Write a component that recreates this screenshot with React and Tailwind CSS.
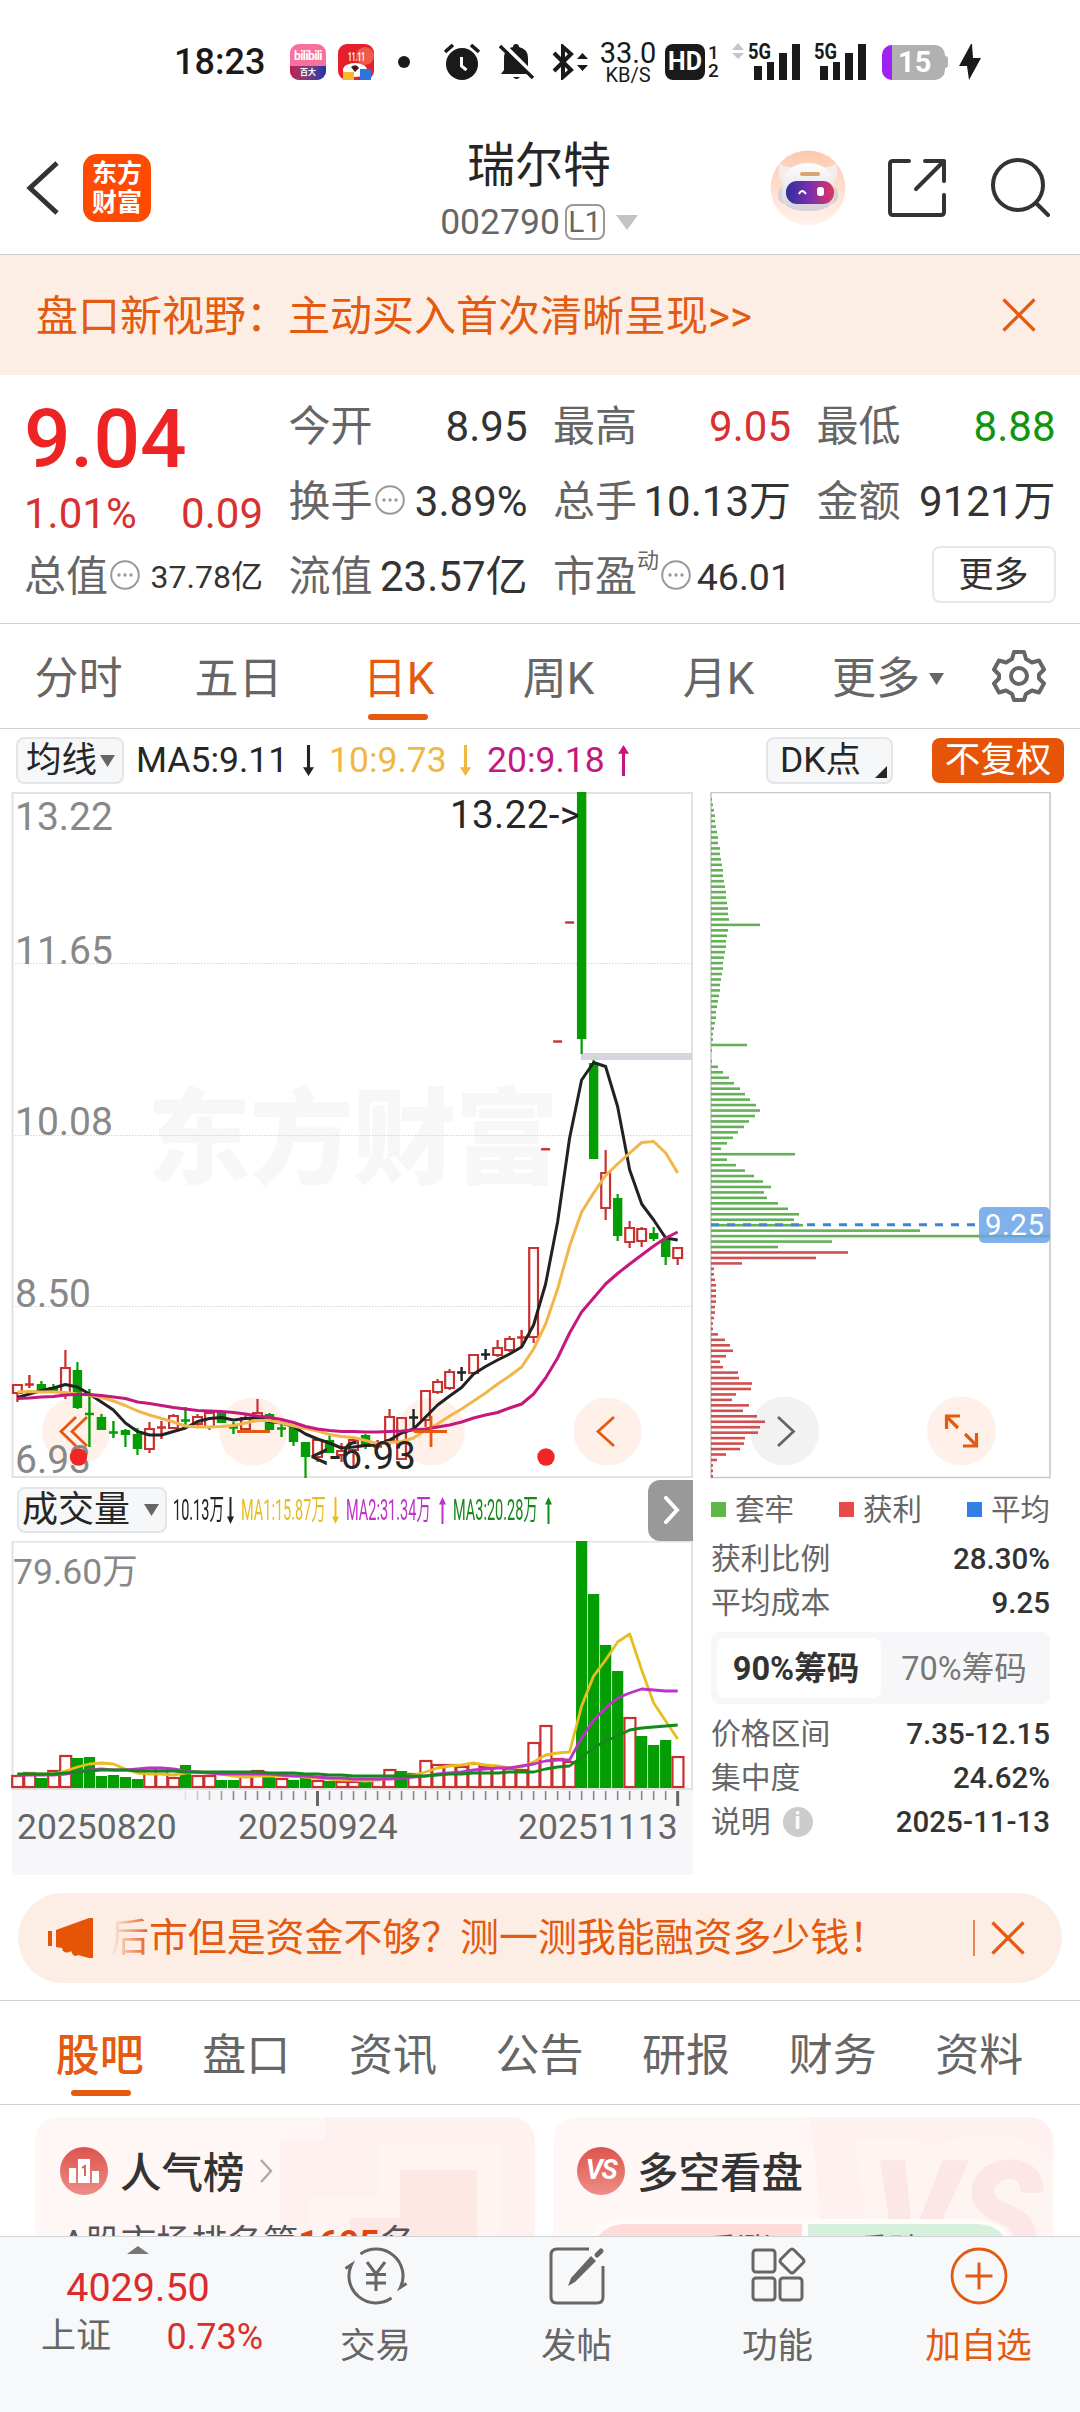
const UP = '#c8312f';
const DOWN = '#049d04';
const FLAT = '#222222';
const ACCENT = '#e35a10';

// [kind, high, bodyTop, bodyBottom, low]
const CANDLES = [
  ['u', 1385, 1385, 1393, 1402], ['u', 1375, 1384, 1385, 1388], ['d', 1381, 1384, 1392, 1393], ['d', 1384, 1387, 1392, 1393],
  ['u', 1350, 1368, 1393, 1399], ['d', 1362, 1370, 1408, 1409], ['d', 1389, 1413, 1415, 1447], ['d', 1414, 1417, 1430, 1430],
  ['d', 1421, 1432, 1433, 1438], ['d', 1429, 1430, 1435, 1447], ['d', 1428, 1434, 1449, 1455], ['u', 1422, 1429, 1449, 1453],
  ['u', 1421, 1427, 1428, 1439], ['u', 1414, 1416, 1428, 1428], ['d', 1407, 1420, 1421, 1425], ['u', 1414, 1417, 1424, 1426],
  ['u', 1411, 1413, 1427, 1430], ['d', 1411, 1412, 1423, 1423], ['d', 1422, 1427, 1428, 1434], ['u', 1415, 1418, 1429, 1429],
  ['u', 1399, 1413, 1418, 1420], ['d', 1413, 1414, 1430, 1430], ['d', 1424, 1428, 1429, 1437], ['d', 1425, 1427, 1442, 1446],
  ['d', 1442, 1442, 1457, 1478], ['u', 1439, 1440, 1457, 1462], ['d', 1434, 1440, 1453, 1453], ['u', 1443, 1451, 1455, 1462],
  ['u', 1438, 1440, 1450, 1466], ['d', 1434, 1435, 1447, 1449], ['u', 1440, 1446, 1447, 1449], ['u', 1409, 1417, 1440, 1446],
  ['u', 1417, 1418, 1459, 1460], ['f', 1409, 1417, 1418, 1428], ['u', 1390, 1391, 1420, 1427], ['u', 1379, 1382, 1392, 1394],
  ['u', 1369, 1372, 1388, 1390], ['f', 1367, 1372, 1373, 1381], ['u', 1354, 1355, 1373, 1373], ['f', 1349, 1354, 1355, 1360],
  ['u', 1340, 1348, 1355, 1357], ['u', 1336, 1339, 1350, 1352], ['u', 1330, 1337, 1338, 1347], ['u', 1248, 1248, 1337, 1343],
  ['u', 1149, 1149, 1149.5, 1149], ['u', 1041, 1041, 1042, 1041], ['u', 922, 922, 923, 922], ['d', 792, 792, 1039, 1054],
  ['d', 1060, 1063, 1159, 1159], ['u', 1150, 1173, 1208, 1220], ['d', 1194, 1198, 1236, 1241], ['u', 1221, 1228, 1242, 1248],
  ['u', 1227, 1229, 1241, 1247], ['d', 1227, 1233, 1239, 1241], ['d', 1239, 1240, 1257, 1265], ['u', 1247, 1248, 1258, 1265],
];

const MA5 = [1397.5, 1394, 1390.5, 1388, 1384.5, 1387, 1394, 1402, 1410, 1423, 1431.5, 1435, 1435, 1431.5, 1428, 1421.5, 1418.5, 1417.5, 1420, 1418.5, 1417.5, 1421.5, 1423, 1426.5, 1434, 1439, 1443, 1448, 1447, 1445.5, 1445, 1440, 1433, 1429, 1417, 1405, 1396, 1387.5, 1374, 1366.5, 1360, 1354, 1347, 1325, 1284, 1222, 1138, 1080, 1062.5, 1066.5, 1106.5, 1170, 1204, 1220, 1238, 1240];
const MA10 = [1392, 1391.5, 1392, 1392, 1392.5, 1394, 1395, 1397.5, 1401, 1405.5, 1411, 1415, 1418.5, 1422, 1426, 1427, 1427, 1426.5, 1425.5, 1423, 1420.5, 1420.5, 1423, 1426, 1428.5, 1431, 1434.5, 1436.5, 1437.5, 1440.5, 1443.5, 1442.5, 1441.5, 1438, 1430, 1424, 1416, 1409, 1401, 1393, 1384, 1376, 1367, 1349, 1324, 1289, 1246, 1212, 1193, 1175.5, 1164, 1153, 1142.5, 1141.5, 1153, 1173];
const MA20 = [1398.5, 1398, 1397, 1396.5, 1395, 1394.5, 1394.5, 1395.5, 1397, 1398.5, 1402, 1403.5, 1405.5, 1407.5, 1409, 1410.5, 1411, 1411.5, 1412.5, 1414, 1416, 1417.5, 1419.5, 1422.5, 1426.5, 1429, 1430.5, 1431.5, 1431.5, 1432, 1432, 1431.5, 1431, 1430, 1429, 1427, 1425, 1422, 1418, 1415, 1412.5, 1408, 1404, 1394, 1378, 1358, 1333, 1312, 1298, 1284, 1273.5, 1264, 1255, 1246, 1238, 1232];

// volume heights, a leading minus marks a falling day
const VOLUMES = [13, 16, -10, 18, 33, -30, -31, -12, -13, -11, -9, 21, 18, 11, -23, 13, 13, -8, -8, 12, 18, -11, 10, -8, -10, 8, -7, 7, 7, -6, 10, 19, -17, 15, 28, 24, 24, 22, 25, 22, 21, 20, 19, 46, 63, 30, 27, -247, -194, -143, -117, 71, -52, -43, -48, 32];
const VMA1 = [13, 14, 14, 14, 17, 21, 24, 25, 24, 19, 15, 14, 14, 13, 15, 16, 15, 14, 12, 11, 12, 12, 12, 12, 11, 10, 9, 8, 8, 7, 8, 10, 11, 13, 16, 20, 22, 23, 25, 23, 22, 20, 21, 26, 33, 35, 36, 82, 112, 128, 146, 154, 118, 85, 67, 49];
const VMA2 = [13, 13, 13, 13, 14, 16, 18, 19, 18, 18, 19, 20, 20, 19, 17, 16, 15, 14, 14, 14, 14, 14, 13, 12, 12, 11, 10, 10, 9, 9, 9, 9, 10, 11, 12, 14, 15, 16, 18, 19, 20, 20, 22, 24, 27, 28, 28, 50, 68, 80, 90, 95, 99, 98, 97, 97];
const VMA3 = [14, 14, 14, 14, 15, 16, 17, 18, 18, 18, 17, 17, 17, 17, 16, 16, 16, 16, 16, 16, 16, 15, 15, 15, 14, 14, 13, 13, 12, 12, 12, 12, 12, 12, 12, 13, 14, 14, 15, 15, 15, 16, 16, 16, 19, 21, 22, 31, 40, 47, 52, 58, 60, 61, 62, 63];

const CHIPS = [1, 2, 3, 4, 4, 5, 6, 7, 7, 9, 9, 10, 11, 12, 12, 13, 14, 15, 15, 16, 17, 17, 18, 49, 17, 16, 15, 15, 14, 13, 12, 12, 11, 10, 9, 9, 8, 7, 6, 5, 5, 4, 3, 2, 2, 36, 1, 0, 1, 7, 12, 18, 23, 29, 34, 39, 45, 49, 44, 38, 33, 27, 22, 16, 10, 84, 16, 25, 34, 43, 52, 60, 53, 56, 67, 77, 88, 83, 92, 209, 339, 121, 67, 137, 105, 31, 3, 3, 4, 5, 5, 5, 5, 4, 4, 3, 2, 2, 7, 14, 19, 22, 15, 9, 12, 27, 28, 41, 40, 25, 21, 38, 32, 46, 54, 49, 47, 34, 33, 29, 15, 6, 2, 2, 2];

const X = (i) => 17.4 + i * 12.005;
const line = (list, f = (v) => v) => list.map((v, i) => `${X(i).toFixed(1)},${f(v)}`).join(' ');

const StatusBar = () => (
  <div className="flex h-[124px] shrink-0 items-center pl-[174px] text-[#1a1a1a]">
    <div className="w-[116px] text-[36px] font-medium">18:23</div>
    <div className="flex h-9 w-9 flex-col items-center overflow-hidden rounded-[9px] bg-[#f8719c] text-white">
      <span className="h-[22px] text-[12px] leading-[24px] font-bold tracking-tighter">bilibili</span>
      <span className="h-[14px] w-full bg-gradient-to-r from-[#c4124c] to-[#1c2fa8] text-center text-[8px] leading-[13px] font-bold">百大</span>
    </div>
    <svg className="ml-3 h-9 w-9" viewBox="0 0 36 36">
      <rect width="36" height="36" rx="9" fill="#e6202b" />
      <circle cx="27" cy="12" r="9" fill="#ef5b49" />
      <ellipse cx="17" cy="26" rx="12" ry="7" fill="#fff" />
      <path d="M13 23q5-4 8 1l-4 4z" fill="#3b1a1a" />
      <rect x="5" y="28" width="11" height="8" fill="#f6b92c" />
      <rect x="22" y="25" width="11" height="11" fill="#2f74dc" />
      <text x="10" y="17" fontSize="13" fontWeight="700" fill="#fff" textLength="17" lengthAdjust="spacingAndGlyphs">11.11</text>
    </svg>
    <div className="ml-6 h-3 w-3 rounded-full bg-[#1a1a1a]" />
    <svg className="ml-[34px] h-9 w-9" viewBox="0 0 36 36" fill="none" stroke="#1a1a1a">
      <circle cx="18" cy="20" r="16" fill="#1a1a1a" stroke="none" />
      <path d="M1 8l8-7M35 8l-8-7" strokeWidth="3.6" />
      <path d="M17.5 13v9l5 4" stroke="#fff" strokeWidth="3" />
    </svg>
    <svg className="ml-[19px] h-9 w-9" viewBox="0 0 36 36" fill="#1a1a1a">
      <path d="M5 26V14q0-9 9-11a3 3 0 0 1 6 0q9 2 9 11v12l4 4H2z" />
      <path d="M14 33h7q-3.5 4-7 0z" />
      <path d="M3-1l34 34" stroke="#fff" strokeWidth="4" />
      <path d="M1 2l33 32" stroke="#1a1a1a" strokeWidth="3.4" />
    </svg>
    <svg className="ml-[16px] h-9 w-[38px]" viewBox="0 0 38 36" fill="none" stroke="#1a1a1a" strokeWidth="4">
      <path d="M3 9l17 17-8 7V3l8 7L3 27" />
      <path d="M26 15h11l-5.5-6zM26 21h11l-5.5 6z" fill="#1a1a1a" stroke="none" />
    </svg>
    <div className="ml-[8px] flex w-[62px] flex-col items-center">
      <span className="h-[22px] text-[29px] leading-[21px]">33.0</span>
      <span className="h-[17px] text-[20px] leading-[20px]">KB/S</span>
    </div>
    <div className="ml-[6px] flex h-9 w-10 items-center justify-center rounded-[8px] bg-[#1a1a1a] text-[25px] font-bold text-white">HD</div>
    <div className="ml-[3px] flex w-[21px] flex-col text-[19px] leading-[18px] font-medium">
      <span>1</span>
      <span>2</span>
    </div>
    <svg className="h-[40px] w-[78px]" viewBox="730 41 78 40" fill="#1a1a1a">
      <path d="M733 49h12l-6-7zM733 52h12l-6 6z" fill="#c6c6c6" />
      <text x="749" y="58" fontSize="22" fontWeight="700" textLength="23" lengthAdjust="spacingAndGlyphs">5G</text>
      <path d="M755 65h8v14h-8zM768 61h7v18h-7zM780 52h8v27h-8zM793 43h8v36h-8z" />
    </svg>
    <svg className="ml-[3px] h-[40px] w-[66px]" viewBox="811 41 66 40" fill="#1a1a1a">
      <text x="815" y="58" fontSize="22" fontWeight="700" textLength="23" lengthAdjust="spacingAndGlyphs">5G</text>
      <path d="M821 65h8v14h-8zM834 61h7v18h-7zM846 52h8v27h-8zM859 43h8v36h-8z" />
    </svg>
    <div className="ml-[6px] h-[35px] w-[63px] overflow-hidden rounded-[10px] bg-[#b1b1b1]">
      <div className="flex h-full items-center border-l-[10px] border-[#a020f6] pl-[6px] text-[29px] font-bold text-white">15</div>
    </div>
    <div className="h-3 w-[3px] rounded-r bg-[#b1b1b1]" />
    <svg className="ml-[11px] h-9 w-[22px]" viewBox="0 0 22 36" fill="#1a1a1a">
      <path d="M12 0L0 22h8L10 36 22 14h-8l-1-14z" />
    </svg>
  </div>
);

const Header = () => (
  <div className="flex h-[131px] shrink-0 items-center border-b border-[#d0d0d0] pb-[3px]">
    <svg className="ml-[24px] h-[56px] w-[38px]" viewBox="0 0 38 56" fill="none" stroke="#333" strokeWidth="5">
      <path d="M33 3L6 28l27 25" />
    </svg>
    <div className="ml-[21px] flex h-[68px] w-[68px] flex-col items-center justify-center rounded-[14px] bg-[#fe4a03] text-[25px] leading-[29px] font-bold text-white">
      <span>东方</span>
      <span>财富</span>
    </div>
    <div className="ml-[188px] flex w-[400px] flex-col items-center pt-[4px]">
      <div className="h-[65px] text-[48px] leading-[64px] text-[#262626]">瑞尔特</div>
      <div className="flex h-[46px] items-center text-[35.5px] leading-[46px] text-[#666]">
        <span>002790</span>
        <span className="ml-[5px] flex h-9 w-10 items-center justify-center rounded-[8px] border-2 border-[#999] text-[30px] leading-none">L1</span>
        <svg className="ml-[11px] h-4 w-[22px]" viewBox="0 0 22 16" fill="#c4c4c4">
          <path d="M0 1h22L11 16z" />
        </svg>
      </div>
    </div>
    <svg className="ml-[31px] h-[76px] w-[76px]" viewBox="0 0 76 76">
      <defs>
        <linearGradient id="halo" x2="0" y2="1">
          <stop stopColor="#fdc9ae" />
          <stop offset="1" stopColor="#fff4ee" />
        </linearGradient>
        <linearGradient id="visor">
          <stop stopColor="#2f2d9c" />
          <stop offset=".5" stopColor="#7a2fae" />
          <stop offset="1" stopColor="#e2355f" />
        </linearGradient>
        <linearGradient id="helmet" x2="0" y2="1">
          <stop stopColor="#fff" />
          <stop offset="1" stopColor="#d5d0d8" />
        </linearGradient>
      </defs>
      <circle cx="38" cy="38" r="37.5" fill="url(#halo)" />
      <path d="M10 13q-4 10 2 20l12-16q-10 1-14-4zM66 13q4 10-2 20L50 17q12 1 16-4z" fill="#f4ece9" />
      <rect x="8" y="36" width="60" height="18" rx="8" fill="#d9d0d4" />
      <path d="M12 44q-1-31 26-31t26 31q2 17-26 17T12 44z" fill="url(#helmet)" />
      <rect x="30" y="22" width="20" height="4" rx="2" fill="#dca36c" />
      <rect x="16" y="31" width="48" height="23" rx="11" fill="url(#visor)" />
      <path d="M29 44q3-6 7 0" fill="none" stroke="#fff" strokeWidth="2" />
      <rect x="47" y="37" width="7" height="9" rx="3" fill="#fff" />
    </svg>
    <svg className="ml-[41px] h-[60px] w-[60px]" viewBox="0 0 60 60" fill="none" stroke="#333" strokeWidth="4" strokeLinecap="round" strokeLinejoin="round">
      <path d="M22 3H6q-3 0-3 3v48q0 3 3 3h48q3 0 3-3V37M38 3h19v20M57 3L29 31" />
    </svg>
    <svg className="ml-[43px] h-[60px] w-[60px]" viewBox="0 0 60 60" fill="none" stroke="#333" strokeWidth="4" strokeLinecap="round">
      <circle cx="28" cy="27" r="25" />
      <path d="M46 45l12 12" />
    </svg>
  </div>
);

const Close = () => (
  <svg className="h-[34px] w-[34px] shrink-0" viewBox="0 0 34 34" stroke="#e35a10" strokeWidth="3.2">
    <path d="M1.5 1.5l31 31M32.5 1.5l-31 31" />
  </svg>
);

const Dots = () => (
  <svg className="mb-[5px] h-[30px] w-[30px] shrink-0" viewBox="0 0 30 30" fill="#999">
    <circle cx="15" cy="15" r="13.8" fill="none" stroke="#999" strokeWidth="2" />
    <circle cx="9" cy="15" r="1.7" />
    <circle cx="15" cy="15" r="1.7" />
    <circle cx="21" cy="15" r="1.7" />
  </svg>
);

const Quote = ({ label, value, dots, sup, color = 'text-[#333]', size = '' }) => (
  <div className="flex h-[75px] items-center whitespace-nowrap text-[42px]">
    <span className="text-[#666]">{label}</span>
    {sup && <span className="mb-[34px] text-[22px] leading-none text-[#666]">{sup}</span>}
    {dots && <span className="ml-[2px]"><Dots /></span>}
    <span className={`ml-auto ${color} ${size}`}>{value}</span>
  </div>
);

const Quotes = () => (
  <div className="grid h-[249px] shrink-0 grid-cols-[239px_239px_238px_239px] gap-x-[25.5px] border-b border-[#d0d3d3] pl-[24px] pt-[15px]">
    <div>
      <div className="h-[94px] text-[82px] leading-[98px] font-medium text-[#ee2424]">9.04</div>
      <div className="flex h-[60px] items-center justify-between text-[42px] text-[#d8302f]">
        <span>1.01%</span>
        <span>0.09</span>
      </div>
      <div className="flex h-[66px] items-center whitespace-nowrap text-[42px] text-[#666]">
        总值
        <span className="ml-[2px]"><Dots /></span>
        <span className="ml-auto text-[32px] text-[#333]">37.78亿</span>
      </div>
    </div>
    <div>
      <Quote label="今开" value="8.95" />
      <Quote label="换手" value="3.89%" dots />
      <Quote label="流值" value="23.57亿" />
    </div>
    <div>
      <Quote label="最高" value="9.05" color="text-[#d8302f]" />
      <Quote label="总手" value="10.13万" />
      <Quote label="市盈" value="46.01" sup="动" size="text-[37.5px]" dots />
    </div>
    <div>
      <Quote label="最低" value="8.88" color="text-[#109510]" />
      <Quote label="金额" value="9121万" />
      <div className="ml-auto mt-[6px] flex h-[57px] w-[124px] items-center justify-center rounded-[8px] border-2 border-[#e6e8ea] pt-[2px] text-[35px] text-[#333]">更多</div>
    </div>
  </div>
);

const PERIODS = ['分时', '五日', '日K', '周K', '月K'];

const PeriodTabs = () => (
  <div className="flex h-[105px] shrink-0 items-center border-b border-[#d0d3d3] text-[44px] text-[#666]">
    {PERIODS.map((name) => (
      <div key={name} className={`relative flex h-full w-[160px] items-center justify-center pr-[3px] pt-[6px] ${name === '日K' ? 'text-[#e35a10]' : ''}`}>
        {name}
        {name === '日K' && <div className="absolute bottom-[8px] left-[48px] h-[6px] w-[60px] rounded-full bg-[#e35a10]" />}
      </div>
    ))}
    <div className="flex w-[190px] items-center pl-[32px] pt-[6px]">
      更多
      <svg className="ml-[9px] h-3 w-[15px]" viewBox="0 0 15 12" fill="#666"><path d="M0 0h15L7.5 12z" /></svg>
    </div>
    <svg className="ml-[2px] h-[54px] w-[54px]" viewBox="0 0 54 54" fill="none" stroke="#666" strokeWidth="4" strokeLinejoin="round">
      <path d="M22 3h10l2 7 6 3.500 7-2 5 9-5 5v4l5 5-5 9-7-2-6 3.500-2 6H22l-2-6-6-3.500-7 2-5-9 5-5v-4l-5-5 5-9 7 2 6-3.500z" />
      <circle cx="27" cy="27" r="8" />
    </svg>
  </div>
);

const Arrow = ({ up, color, className }) => (
  <svg className={`shrink-0 ${className}`} viewBox="0 0 10 32" preserveAspectRatio="none" fill={color}>
    {up ? <path d="M5 0l5 9H6.400v23H3.600V9H0z" /> : <path d="M5 32l5-9H6.400V0H3.600v23H0z" />}
  </svg>
);

const ChartBar = () => (
  <div className="flex h-[63px] shrink-0 items-center whitespace-nowrap text-[35.5px]">
    <div className="ml-4 flex h-[47px] w-[108px] items-center rounded-[8px] border-2 border-[#e3e5e7] bg-[#f6f7f9] pl-[8px] text-[#262626]">
      均线
      <svg className="ml-[3px] h-3 w-[15px]" viewBox="0 0 15 12" fill="#666"><path d="M0 0h15L7.5 12z" /></svg>
    </div>
    <div className="ml-[12px] w-[167px] text-[#262626]">MA5:9.11</div>
    <Arrow color="#222" className="h-[31px] w-[11px]" />
    <div className="ml-[15px] w-[131px] text-[#f1b73e]">10:9.73</div>
    <Arrow color="#f1b73e" className="h-[31px] w-[11px]" />
    <div className="ml-[16px] w-[131px] text-[#c5187e]">20:9.18</div>
    <Arrow up color="#c5187e" className="h-[31px] w-[11px]" />
    <div className="ml-auto flex h-[47px] w-[127px] items-center rounded-[8px] border-2 border-[#e3e5e7] bg-[#f6f7f9] pl-[12px] text-[#262626]">
      DK点
      <svg className="ml-auto mr-[4px] mt-[22px] h-3 w-3" viewBox="0 0 12 12" fill="#262626"><path d="M12 0v12H0z" /></svg>
    </div>
    <div className="ml-[39px] mr-[16px] flex h-[45px] w-[132px] items-center justify-center rounded-[8px] bg-[#e65507] text-white">不复权</div>
  </div>
);

const Candle = ({ i, data }) => {
  const [kind, high, top, bottom, low] = data;
  const x = X(i);
  const color = kind === 'u' ? UP : kind === 'd' ? DOWN : FLAT;
  if (bottom - top <= 2) {
    return <path d={`M${x} ${high}V${low}M${x - 4.5} ${(top + bottom) / 2}h9`} stroke={color} strokeWidth="2.4" />;
  }
  if (kind === 'd') {
    return (
      <g fill={color}>
        <rect x={x - 1.1} y={high} width="2.2" height={low - high} />
        <rect x={x - 4.7} y={top} width="9.4" height={bottom - top} />
      </g>
    );
  }
  return (
    <path
      d={`M${x} ${high}V${top}M${x} ${bottom}V${low}M${x - 4.4} ${top}h8.8V${bottom}h-8.8z`}
      fill="none"
      stroke={color}
      strokeWidth="2.2"
    />
  );
};

const KChart = () => (
  <svg className="block h-[687px] w-[700px]" viewBox="0 792 700 687" fill="none">
    <text x="147" y="1176" fontSize="104" fontWeight="900" fill="#f7f7f7" textLength="412">东方财富</text>
    <path d="M12 963.5H692M12 1135.5H692M12 1306.5H692" stroke="#d4d4d4" strokeDasharray="1.5 1.5" />
    <path d="M12.5 793H692V1477H12.5z" stroke="#e2e2e2" strokeWidth="2" />
    <g fill="#fff1ea">
      <circle cx="76" cy="1431.5" r="34" />
      <circle cx="253" cy="1431.5" r="34" />
      <circle cx="431" cy="1431.5" r="34" />
      <circle cx="607.5" cy="1431.5" r="34" />
    </g>
    <rect x="581" y="1053" width="111" height="7" fill="#d3d6dc" />
    {CANDLES.map((c, i) => <Candle key={i} i={i} data={c} />)}
    <g strokeWidth="3" strokeLinejoin="round">
      <polyline points={line(MA5)} stroke="#222" />
      <polyline points={line(MA10)} stroke="#f1b74a" />
      <polyline points={line(MA20)} stroke="#c5187e" />
    </g>
    <g stroke={ACCENT} strokeWidth="2.8">
      <path d="M76 1417l-15 14.500 15 14.500M87 1417l-15 14.500 15 14.500" />
      <path d="M237 1431.500h33M414 1431.500h33M431 1416v31" />
      <path d="M614 1417l-16 14.500 16 14.500" />
    </g>
    <g fontSize="39" fill="#888">
      <text x="15" y="830">13.22</text>
      <text x="15" y="964">11.65</text>
      <text x="15" y="1135">10.08</text>
      <text x="15" y="1307">8.50</text>
      <text x="15" y="1473">6.93</text>
    </g>
    <circle cx="78.5" cy="1457" r="8.7" fill="#f02626" />
    <circle cx="546" cy="1457" r="8.7" fill="#f02626" />
    <g fontSize="38.5" fill="#262626">
      <text x="450" y="828" textLength="130">13.22-&gt;</text>
      <text x="310" y="1469" textLength="106">&lt;-6.93</text>
    </g>
  </svg>
);

const VolumeLabel = ({ text, up, color, width }) => (
  <div className="flex items-center" style={{ color }}>
    <div style={{ width }}>
      <span className="inline-block origin-left scale-x-[0.5] text-[29px]">{text}</span>
    </div>
    <Arrow up={up} color={color} className="ml-[6px] h-[27px] w-[7px]" />
  </div>
);

const VolumeBar = () => (
  <div className="flex h-[62px] items-center whitespace-nowrap">
    <div className="ml-[17px] flex h-[46px] w-[150px] shrink-0 items-center rounded-[8px] border-2 border-[#e3e5e7] bg-[#f6f7f9] pl-[3px] text-[36px] text-[#262626]">
      成交量
      <svg className="ml-[14px] h-3 w-[15px]" viewBox="0 0 15 12" fill="#666"><path d="M0 0h15L7.5 12z" /></svg>
    </div>
    <div className="ml-[6px] flex w-[475px] shrink-0 gap-[7px]">
      <VolumeLabel text="10.13万" color="#222" width={48} />
      <VolumeLabel text="MA1:15.87万" color="#e8bd22" width={85} />
      <VolumeLabel text="MA2:31.34万" up color="#bd32c8" width={87} />
      <VolumeLabel text="MA3:20.28万" up color="#14881a" width={86} />
    </div>
    <div className="flex h-[61px] w-[45px] items-center justify-center rounded-l-[12px] bg-[#999]">
      <svg className="ml-[3px] h-[28px] w-[18px]" viewBox="0 0 18 28" fill="none" stroke="#fff" strokeWidth="4" strokeLinecap="round">
        <path d="M3 2l11 12L3 26" />
      </svg>
    </div>
  </div>
);

const VolumeChart = () => (
  <svg className="block h-[334px] w-[700px]" viewBox="0 1541 700 334" fill="none">
    <rect x="12" y="1789" width="681" height="86" fill="#f7f7f9" />
    <path d="M12.5 1541.5H692V1789H12.5z" stroke="#e2e2e2" strokeWidth="2" />
    {VOLUMES.map((v, i) =>
      v < 0 ? (
        <rect key={i} x={X(i) - 5.6} y={1788 + v} width="11.2" height={-v} fill={DOWN} />
      ) : (
        <rect key={i} x={X(i) - 5.2} y={1789 - v} width="11" height={v - 2} fill="#fff" stroke={UP} strokeWidth="2.2" />
      )
    )}
    <g strokeWidth="2.8" strokeLinejoin="round">
      <polyline points={line(VMA1, (v) => 1788 - v)} stroke="#e8bd22" />
      <polyline points={line(VMA2, (v) => 1788 - v)} stroke="#bd32c8" />
      <polyline points={line(VMA3, (v) => 1788 - v)} stroke="#14881a" />
    </g>
    {VOLUMES.map((_, i) => {
      if (i < 14) return null;
      const major = i === 25 || i === 55;
      return (
        <path key={i} d={`M${X(i)} 1791v${major ? 15 : 9}`} stroke={major ? '#666' : '#888'} strokeWidth={major ? 3 : 1.6} opacity={Math.min(1, (i - 13) / 5)} />
      );
    })}
    <text x="13" y="1584" fontSize="35.5" fill="#888">79.60万</text>
    <g fontSize="35.5" fill="#666">
      <text x="17" y="1839">20250820</text>
      <text x="238" y="1839">20250924</text>
      <text x="518" y="1839">20251113</text>
    </g>
  </svg>
);

const ChipChart = () => (
  <svg className="block h-[687px] w-[380px]" viewBox="700 792 380 687" fill="none">
    <path d="M711 792.5h339V1477.5H711z" stroke="#c8c8c8" strokeWidth="1.6" />
    <circle cx="784.5" cy="1431" r="34.5" fill="#f2f2f2" />
    <circle cx="961.5" cy="1431" r="34.5" fill="#fff1ea" />
    {CHIPS.map((w, i) => (
      <rect key={i} x="711" y={798 + i * 5.46} width={w} height="2.6" fill={i < 83 ? '#63b057' : '#cf5050'} />
    ))}
    <path d="M711 1224.700h267" stroke="#3d83dc" strokeWidth="3" strokeDasharray="8 8" />
    <rect x="979" y="1207" width="71" height="36" rx="5" fill="#6ba3e6" fillOpacity=".85" />
    <text x="985" y="1235" fontSize="29.5" fill="#fff" textLength="59">9.25</text>
    <path d="M778 1417l15.500 14.500L778 1446" stroke="#666" strokeWidth="2.8" />
    <g stroke={ACCENT} strokeWidth="3.2">
      <path d="M946.500 1429v-13h13.500M947 1417l11 11M976.500 1433v13H963M976 1445l-11-11" />
    </g>
  </svg>
);

const LEGEND = [
  ['套牢', 'bg-[#5cb747]'],
  ['获利', 'bg-[#e84a4c]'],
  ['平均', 'bg-[#3280e3]'],
];

const Stat = ({ label, value }) => (
  <div className="flex h-[44px] items-center justify-between">
    <span className="flex items-center text-[29.8px] text-[#666]">{label}</span>
    <span className="text-[29.5px] font-medium text-[#333]">{value}</span>
  </div>
);

const ChipPanel = () => (
  <div className="w-[380px]">
    <ChipChart />
    <div className="pl-[11px] pr-[30px]">
      <div className="mb-[5px] flex h-[53px] items-center justify-between pt-[10px] text-[29.5px] text-[#666]">
        {LEGEND.map(([name, color]) => (
          <div key={name} className="flex items-center gap-[9px]">
            <div className={`-mt-[2px] h-[15px] w-[15px] ${color}`} />
            {name}
          </div>
        ))}
      </div>
      <Stat label="获利比例" value="28.30%" />
      <Stat label="平均成本" value="9.25" />
      <div className="mb-[8px] mt-[7px] flex h-[72px] rounded-[8px] bg-[#f7f7f9] p-[6px] text-[32.5px]">
        <div className="flex w-[164px] items-center justify-center rounded-[8px] bg-white pr-[6px] pt-[2px] font-bold text-[#333]">90%筹码</div>
        <div className="flex flex-1 items-center justify-center pl-[3px] pt-[2px] text-[#777]">70%筹码</div>
      </div>
      <Stat label="价格区间" value="7.35-12.15" />
      <Stat label="集中度" value="24.62%" />
      <Stat
        label={
          <>
            说明
            <span className="ml-[12px] flex h-[30px] w-[30px] items-center justify-center rounded-full bg-[#ccc] text-[23px] font-bold text-white">i</span>
          </>
        }
        value="2025-11-13"
      />
    </div>
  </div>
);

const AdPill = () => (
  <div className="mx-[18px] mt-[18px] flex h-[90px] shrink-0 items-center rounded-full bg-[#fceee5] pl-[29px] pr-[37px] text-[39px] text-[#e35a10]">
    <svg className="h-10 w-[48px] shrink-0" viewBox="0 0 48 40" fill="#e65507">
      <path d="M1 13h4v15H1zM9 12l33-12h4v40h-4l-11-3q-2 2-5 0l-2-4q-4 3-8 0l-1-3-6-1z" />
    </svg>
    <div className="ml-[15px] whitespace-nowrap tracking-[-0.1px]">
      <span className="bg-gradient-to-r from-[#fceee5] to-[#e35a10] bg-clip-text text-transparent">后</span>市但是资金不够？测一测我能融资多少钱！
    </div>
    <div className="ml-auto mr-[16px] h-9 w-[2px] bg-[#e98a55]" />
    <Close />
  </div>
);

const SECTIONS = ['股吧', '盘口', '资讯', '公告', '研报', '财务', '资料'];

const SectionTabs = () => (
  <div className="mt-[17px] flex h-[105px] shrink-0 items-center border-y border-[#d0d3d3] px-[27px] text-[44px] text-[#666]">
    {SECTIONS.map((name, i) => (
      <div key={name} className={`relative flex h-full flex-1 items-center justify-center pr-[1px] pt-[8px] ${i === 0 ? 'font-medium text-[#e35a10]' : ''}`}>
        {name}
        {i === 0 && <div className="absolute bottom-[8px] left-[44px] h-[6px] w-[60px] rounded-full bg-[#e35a10]" />}
      </div>
    ))}
  </div>
);

const Cards = () => (
  <div className="flex h-[131px] shrink-0 gap-[18px] overflow-hidden pl-[35px] pt-[12px]">
    <div className="relative h-[300px] w-[500px] shrink-0 overflow-hidden rounded-[24px] bg-[#fff7f5]">
      <svg className="absolute inset-0 h-[300px] w-[500px]" viewBox="0 0 500 300">
        <path d="M290 0h210v300H245V22h45z" fill="#fef1ef" />
        <path d="M345 25h120v275H275V80h70z" fill="#fef4f2" />
        <path d="M365 53h77v247H315V101h50z" fill="#fde8e6" />
      </svg>
      <div className="relative flex h-[108px] items-center pl-[25px]">
        <svg className="h-12 w-12" viewBox="0 0 48 48">
          <defs>
            <linearGradient id="badge" x2="0" y2="1">
              <stop stopColor="#db544e" />
              <stop offset="1" stopColor="#ee8d86" />
            </linearGradient>
          </defs>
          <circle cx="24" cy="24" r="24" fill="url(#badge)" />
          <path d="M9 21h7v15H9zM18 12h12v24H18zM32 24h7v12h-7z" fill="#fff" />
          <path d="M22 21l3-2v10" stroke="#e0645d" strokeWidth="2" fill="none" />
        </svg>
        <span className="ml-[12px] pt-[5px] text-[41.5px] font-medium text-[#333]">人气榜</span>
        <svg className="ml-[14px] h-6 w-[14px]" viewBox="0 0 14 24" fill="none" stroke="#aaa" strokeWidth="2.4"><path d="M2 1l10 11L2 23" /></svg>
      </div>
      <div className="relative -mt-[4px] whitespace-nowrap pl-[27px] text-[35.5px] text-[#555]">
        A股市场排名第<span className="font-bold text-[#e0450c]">1695</span>名
      </div>
    </div>
    <div className="relative h-[300px] w-[500px] shrink-0 overflow-hidden rounded-[24px] bg-[#fff7f5]">
      {/* big VS mark behind the card */}
      <svg className="absolute inset-0 h-[300px] w-[500px]" viewBox="0 0 500 300">
        <path d="M257 0h243v300H290z" fill="#fef1ef" />
        <path d="M302 22h64l12 8q50-22 100-4l22 20v120H320z" fill="#fef5f3" />
        <text x="318" y="150" fontSize="150" fontWeight="900" fontStyle="italic" fill="#fce6e6" textLength="172" lengthAdjust="spacingAndGlyphs">VS</text>
      </svg>
      <div className="relative flex h-[108px] items-center pl-[24px]">
        <div className="flex h-12 w-12 items-center justify-center rounded-full bg-gradient-to-b from-[#db544e] to-[#ee8d86] text-[27px] font-bold tracking-tighter italic text-white">VS</div>
        <span className="ml-[12px] pt-[5px] text-[41.5px] font-medium text-[#333]">多空看盘</span>
      </div>
      <div className="relative -mt-[6px] ml-[32px] flex h-[80px] w-[432px] gap-[6px] rounded-[40px] border-[5px] border-[#fffcfb] bg-[#fffcfb] text-[34px]">
        <div className="w-[212px] rounded-l-[34px] bg-[#fddcd9] pl-[113px] pt-[6px] text-[#c8321c]">看涨</div>
        <div className="flex-1 rounded-r-[34px] bg-[#d5f0dc] pl-[46px] pt-[6px] text-[#109540]">看跌</div>
      </div>
    </div>
  </div>
);

const NavItem = ({ label, children, active }) => (
  <div className={`flex w-[201px] flex-col items-center pr-[2px] text-[35.5px] ${active ? 'text-[#e35a10]' : 'text-[#666]'}`}>
    <svg className="mt-[8px] h-[60px] w-[68px]" viewBox="0 0 68 60" fill="none" stroke="currentColor" strokeWidth="3">
      {children}
    </svg>
    <span className="mt-[14px]">{label}</span>
  </div>
);

const BottomNav = () => (
  <div className="flex h-[176px] shrink-0 border-t border-[#d0d3d6] bg-[#f7f8fa] pt-[1px] leading-[52px]">
    <div className="w-[276px]">
      <svg className="ml-[127px] mt-[8px] h-[8px] w-[22px]" viewBox="0 0 22 8" fill="#777"><path d="M0 8h22L11 0z" /></svg>
      <div className="mt-[9px] text-center text-[39.5px] leading-[50px] text-[#dc2b2b]">4029.50</div>
      <div className="flex items-center justify-between pl-[41px] pr-[13px] text-[35px] leading-[48px]">
        <span className="text-[#666]">上证</span>
        <span className="text-[36px] text-[#d8302f]">0.73%</span>
      </div>
    </div>
    <NavItem label="交易">
      <path d="M18.500 7.900A27 27 0 0 1 58.500 41.400l6-4M49.500 52.100A27 27 0 0 1 9.500 18.600l-6 4" />
      <path d="M25 16l9 12 9-12M34 28v17M24 28.500h20M24 37h20" />
    </NavItem>
    <NavItem label="发帖">
      <path d="M46 3H14q-6 0-6 6v42q0 6 6 6h40q6 0 6-6V20" />
      <path d="M48 10l5 5-21 21-7 4 3-8z" fill="currentColor" stroke="none" />
      <path d="M54 9l4-4" strokeWidth="5" strokeLinecap="round" />
    </NavItem>
    <NavItem label="功能">
      <rect x="9" y="4" width="22" height="22" rx="3" />
      <path d="M46 4q2-2 4 0l9 9q2 2 0 4l-9 9q-2 2-4 0l-9-9q-2-2 0-4z" />
      <rect x="9" y="32" width="22" height="22" rx="3" />
      <rect x="36" y="32" width="22" height="22" rx="3" />
    </NavItem>
    <NavItem label="加自选" active>
      <circle cx="34" cy="30" r="27" strokeWidth="2.8" />
      <path d="M20.500 30h27M34 16.500v27" />
    </NavItem>
  </div>
);

const App = () => (
  <div className="flex h-[2412px] w-[1080px] flex-col overflow-hidden bg-white font-[Roboto,'Noto_Sans_CJK_SC',sans-serif] leading-tight">
    <StatusBar />
    <Header />
    <div className="flex h-[120px] shrink-0 items-center justify-between bg-[#fceee5] pl-[36px] pr-[44px] text-[42px] text-[#e35a10]">
      <span className="pt-[5px]">盘口新视野：主动买入首次清晰呈现&gt;&gt;</span>
      <Close />
    </div>
    <Quotes />
    <PeriodTabs />
    <ChartBar />
    <div className="flex h-[1083px] shrink-0">
      <div className="w-[700px]">
        <KChart />
        <VolumeBar />
        <VolumeChart />
      </div>
      <ChipPanel />
    </div>
    <AdPill />
    <SectionTabs />
    <Cards />
    <BottomNav />
  </div>
);

export default App;
